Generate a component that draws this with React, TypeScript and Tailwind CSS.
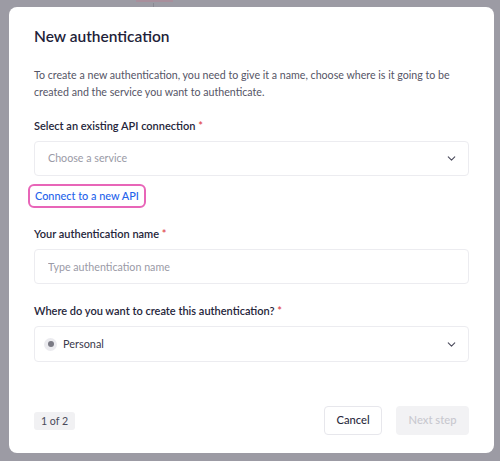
import { ChevronDown } from 'lucide-react';

const Label = ({ text }: { text: string }) => (
  <label className="block text-[11px] leading-4 font-semibold text-[#25253a] mb-[7px]">
    {text} <span className="text-[#e0484f]">*</span>
  </label>
);

const App = () => {
  return (
    <div
      className="relative w-[500px] h-[461px] bg-[#9c9ba4] overflow-hidden pt-[7px] pl-[9px]"
      style={{ fontFamily: 'Lato, "Open Sans", sans-serif' }}
    >
      {/* bits of the page behind the overlay */}
      <div className="absolute top-0 left-[136px] w-[37px] h-[2px] bg-[#a88f9c]" />
      <div className="absolute top-[3px] left-[153px] w-px h-[4px] bg-[#8a8992]" />

      <div className="w-[485px] h-[446px] bg-white rounded-lg px-[25px] pt-[17px] pb-[18px] flex flex-col">
        <h2 className="text-[15.5px] leading-6 font-semibold text-[#1f1f3a]">New authentication</h2>

        <p className="mt-[18px] text-[10.65px] leading-[17px] text-[#555566]">
          To create a new authentication, you need to give it a name, choose where is it going to be
          created and the service you want to authenticate.
        </p>

        <div className="mt-[18px]">
          <Label text="Select an existing API connection" />
          <button
            type="button"
            className="w-full h-[35px] border border-[#ececf0] rounded-[4px] pl-[13px] pr-[10px] flex items-center justify-between"
          >
            <span className="text-[10.7px] text-[#9a9aa6]">Choose a service</span>
            <ChevronDown className="w-[13px] h-[13px] text-[#4b4b5c]" strokeWidth={2} />
          </button>
          <div className="mt-[6px]">
            <a
              href="#"
              className="-ml-[6px] inline-flex items-center h-6 px-[5px] border-2 border-[#e865b8] rounded-md text-[10.9px] font-medium text-[#2563eb]"
            >
              Connect to a new API
            </a>
          </div>
        </div>

        <div className="mt-[18px]">
          <Label text="Your authentication name" />
          <input
            type="text"
            placeholder="Type authentication name"
            className="w-full h-[35px] border border-[#ececf0] rounded-[4px] px-[13px] text-[10.7px] placeholder:text-[#9a9aa6] outline-none"
          />
        </div>

        <div className="mt-[19px]">
          <Label text="Where do you want to create this authentication?" />
          <button
            type="button"
            className="w-full h-[36px] border border-[#ececf0] rounded-[4px] pl-[9px] pr-[10px] flex items-center justify-between"
          >
            <span className="flex items-center">
              <span className="w-[13px] h-[13px] rounded-full bg-[#ebebef] flex items-center justify-center">
                <span className="w-[6px] h-[6px] rounded-full bg-[#7a7a84]" />
              </span>
              <span className="ml-[6px] text-[10.9px] text-[#3a3a4c]">Personal</span>
            </span>
            <ChevronDown className="w-[13px] h-[13px] text-[#4b4b5c]" strokeWidth={2} />
          </button>
        </div>

        <div className="mt-auto flex items-center justify-between">
          <span className="h-[18px] px-[7px] rounded-[3px] bg-[#f1f1f3] text-[10.6px] leading-[18px] text-[#4a4a5a]">
            1 of 2
          </span>
          <div className="flex items-center gap-[14px]">
            <button
              type="button"
              className="w-[58px] h-[29px] border border-[#e7e7ec] rounded-[4px] text-[11.2px] font-medium text-[#2a2a3e]"
            >
              Cancel
            </button>
            <button
              type="button"
              disabled
              className="w-[73px] h-[29px] rounded-[4px] bg-[#f2f2f4] text-[11.2px] font-medium text-[#c8c8cf]"
            >
              Next step
            </button>
          </div>
        </div>
      </div>
    </div>
  );
};

export default App;
